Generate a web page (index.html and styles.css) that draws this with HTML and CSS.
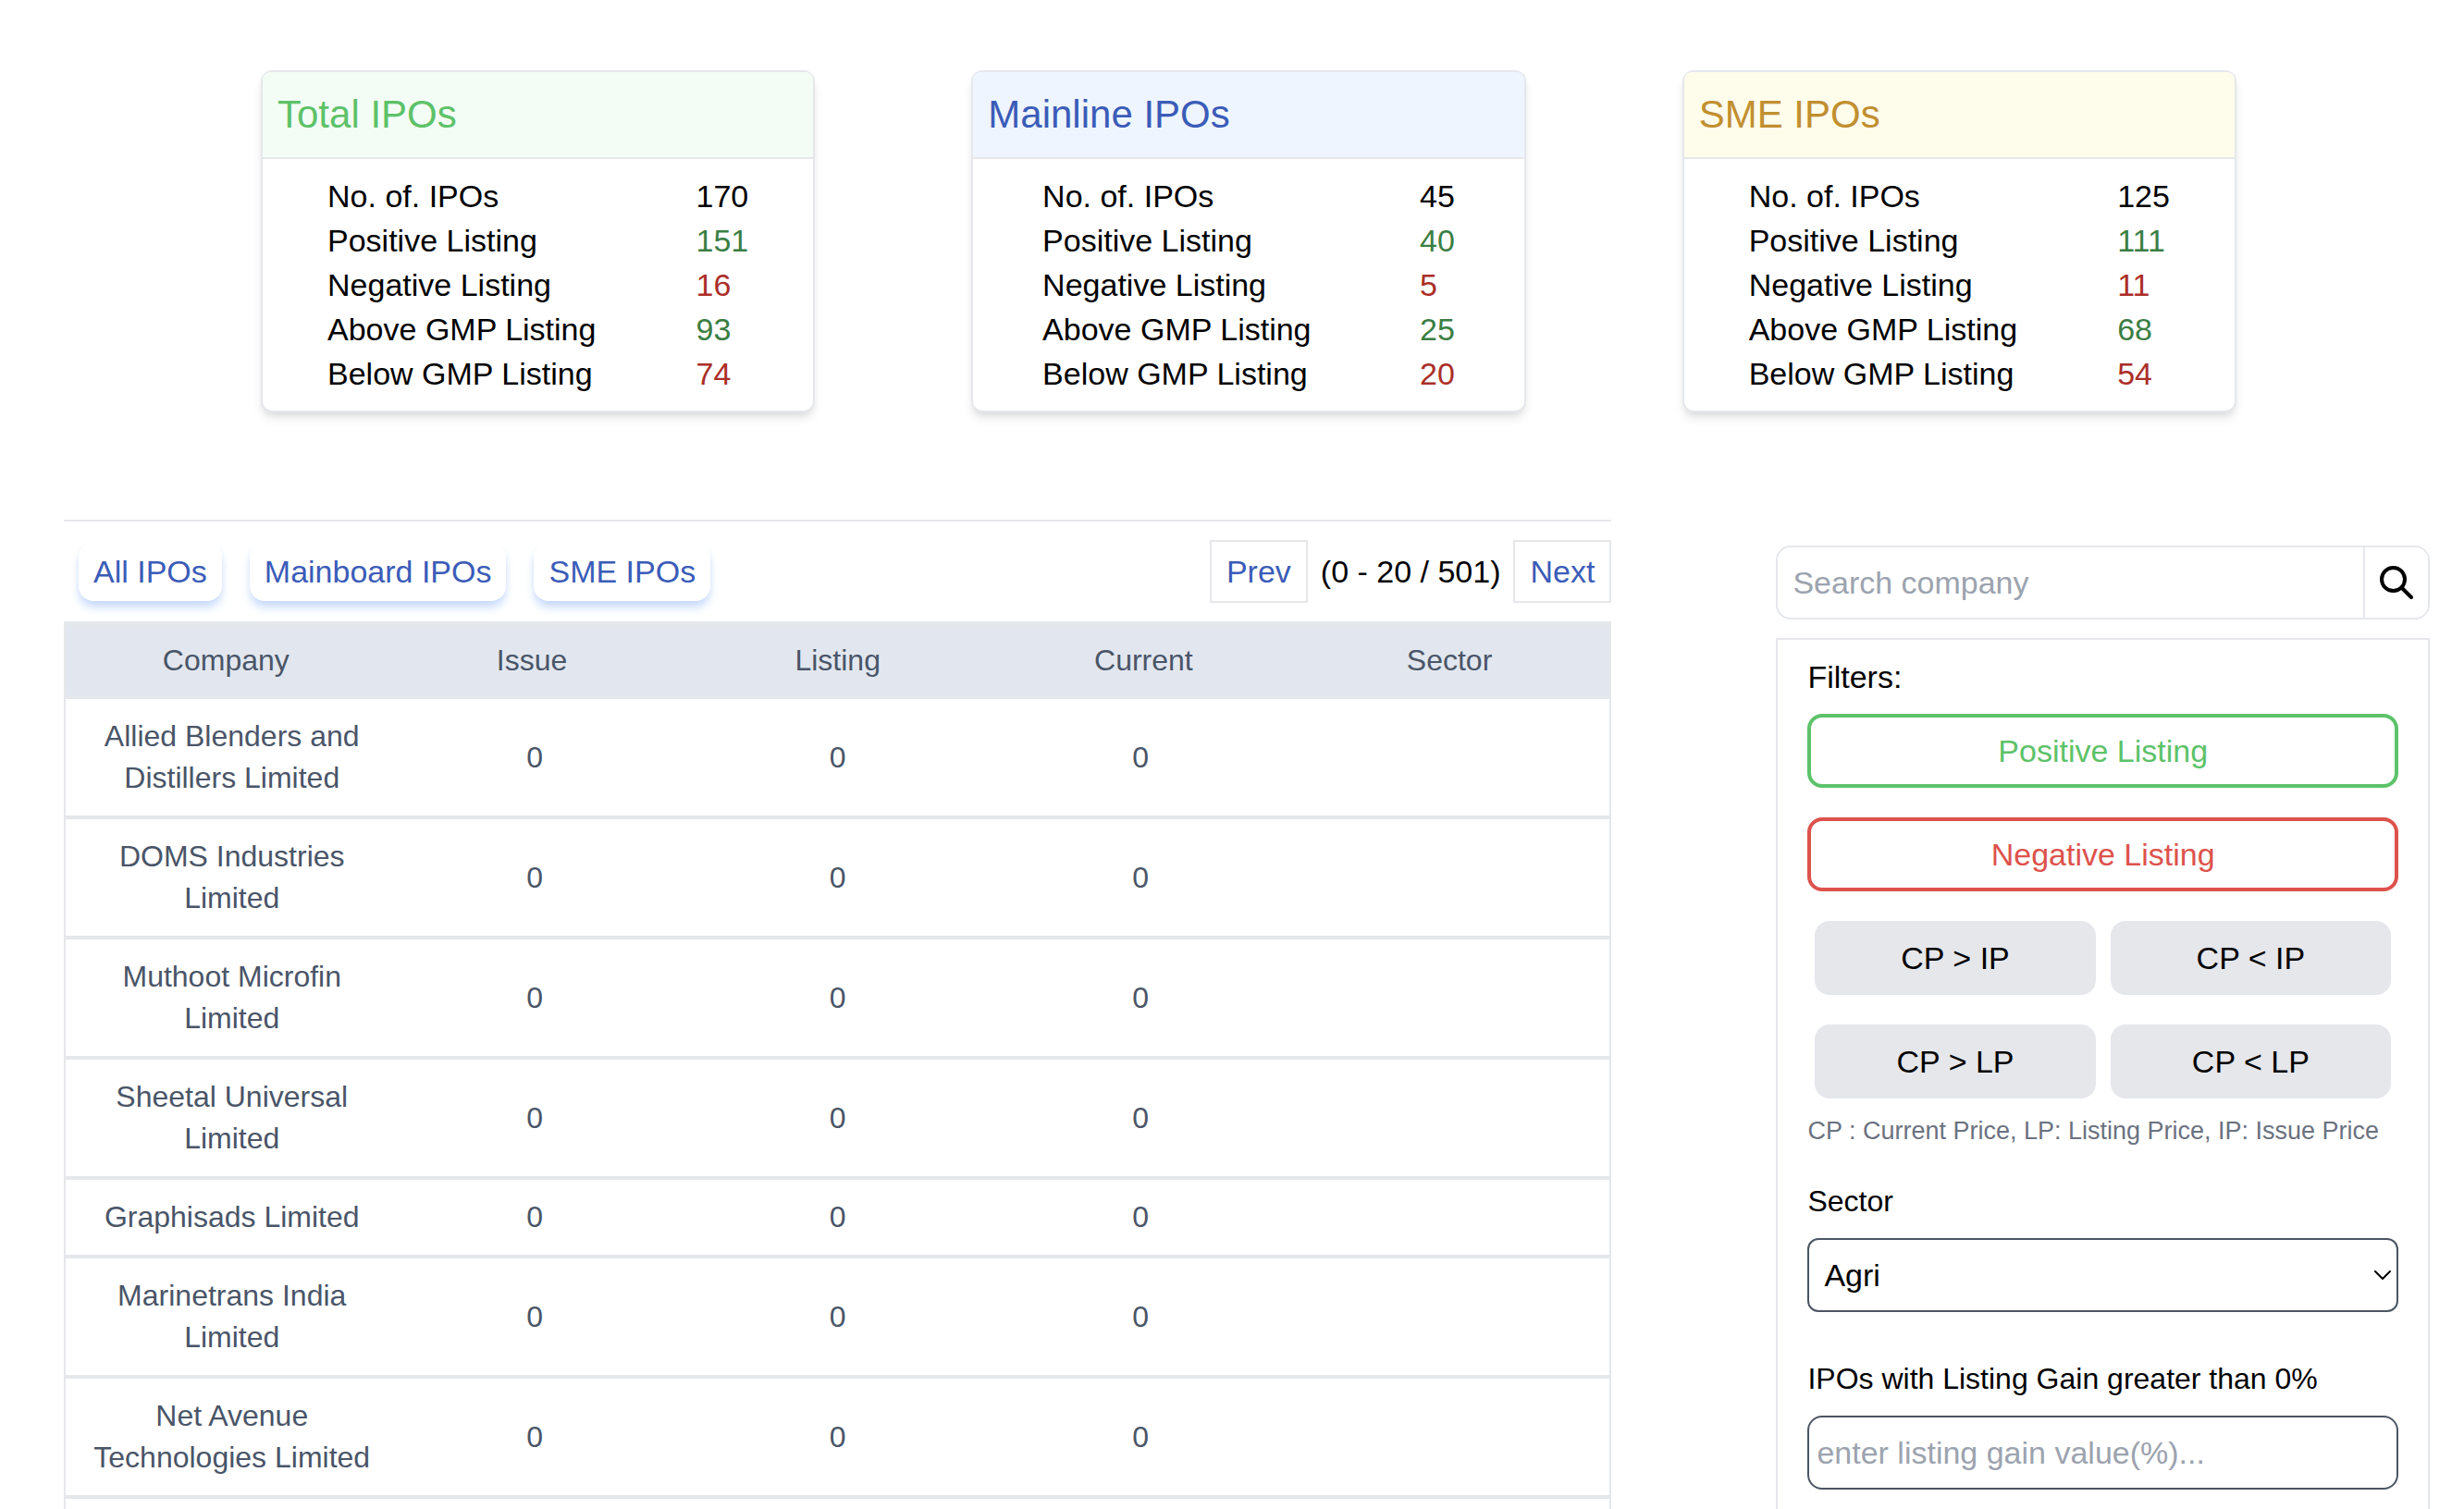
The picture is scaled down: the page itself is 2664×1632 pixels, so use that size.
FILE: index.html
```html
<!DOCTYPE html>
<html lang="en">
<head>
<meta charset="utf-8">
<meta name="viewport" content="width=device-width, initial-scale=1">
<title>IPO Performance</title>
<link rel="stylesheet" href="styles.css">
</head>
<body>
<main class="page">
  <section class="cards">
    <article class="card">
      <h2 class="card-title card-title-total">Total IPOs</h2>
      <dl class="stats">
        <dt>No. of. IPOs</dt><dd>170</dd>
        <dt>Positive Listing</dt><dd class="up">151</dd>
        <dt>Negative Listing</dt><dd class="down">16</dd>
        <dt>Above GMP Listing</dt><dd class="up">93</dd>
        <dt>Below GMP Listing</dt><dd class="down">74</dd>
      </dl>
    </article>
    <article class="card">
      <h2 class="card-title card-title-mainline">Mainline IPOs</h2>
      <dl class="stats">
        <dt>No. of. IPOs</dt><dd>45</dd>
        <dt>Positive Listing</dt><dd class="up">40</dd>
        <dt>Negative Listing</dt><dd class="down">5</dd>
        <dt>Above GMP Listing</dt><dd class="up">25</dd>
        <dt>Below GMP Listing</dt><dd class="down">20</dd>
      </dl>
    </article>
    <article class="card">
      <h2 class="card-title card-title-sme">SME IPOs</h2>
      <dl class="stats">
        <dt>No. of. IPOs</dt><dd>125</dd>
        <dt>Positive Listing</dt><dd class="up">111</dd>
        <dt>Negative Listing</dt><dd class="down">11</dd>
        <dt>Above GMP Listing</dt><dd class="up">68</dd>
        <dt>Below GMP Listing</dt><dd class="down">54</dd>
      </dl>
    </article>
  </section>

  <div class="content">
    <section class="listing">
      <div class="toolbar">
        <div class="tabs">
          <button class="tab" type="button">All IPOs</button>
          <button class="tab" type="button">Mainboard IPOs</button>
          <button class="tab" type="button">SME IPOs</button>
        </div>
        <div class="pager">
          <button class="pager-button" type="button">Prev</button>
          <span>(0 - 20 / 501)</span>
          <button class="pager-button" type="button">Next</button>
        </div>
      </div>
      <div class="table-wrap">
        <table class="ipo-table">
          <thead>
            <tr><th scope="col">Company</th><th scope="col">Issue</th><th scope="col">Listing</th><th scope="col">Current</th><th scope="col">Sector</th></tr>
          </thead>
          <tbody>
            <tr><td>Allied Blenders and Distillers Limited</td><td>0</td><td>0</td><td>0</td><td></td></tr>
            <tr><td>DOMS Industries Limited</td><td>0</td><td>0</td><td>0</td><td></td></tr>
            <tr><td>Muthoot Microfin Limited</td><td>0</td><td>0</td><td>0</td><td></td></tr>
            <tr><td>Sheetal Universal Limited</td><td>0</td><td>0</td><td>0</td><td></td></tr>
            <tr><td>Graphisads Limited</td><td>0</td><td>0</td><td>0</td><td></td></tr>
            <tr><td>Marinetrans India Limited</td><td>0</td><td>0</td><td>0</td><td></td></tr>
            <tr><td>Net Avenue Technologies Limited</td><td>0</td><td>0</td><td>0</td><td></td></tr>
          </tbody>
        </table>
      </div>
    </section>

    <aside class="sidebar">
      <form class="search">
        <input class="search-input" type="search" placeholder="Search company" aria-label="Search company">
        <button class="search-button" type="button" aria-label="Search">
          <svg class="search-icon" viewBox="0 0 36 36" fill="none" stroke="currentColor" stroke-width="4" stroke-linecap="round" aria-hidden="true">
            <circle cx="14.5" cy="14.5" r="12.5"/>
            <path d="M23.5 23.5L34 34"/>
          </svg>
        </button>
      </form>
      <div class="filters">
        <h3 class="filters-title">Filters:</h3>
        <div class="filter-main">
          <button class="filter filter-positive" type="button">Positive Listing</button>
          <button class="filter filter-negative" type="button">Negative Listing</button>
        </div>
        <div class="filter-grid">
          <button class="filter" type="button">CP &gt; IP</button>
          <button class="filter" type="button">CP &lt; IP</button>
          <button class="filter" type="button">CP &gt; LP</button>
          <button class="filter" type="button">CP &lt; LP</button>
        </div>
        <p class="note">CP : Current Price, LP: Listing Price, IP: Issue Price</p>
        <div class="field">
          <label for="sector">Sector</label>
          <div class="select-wrap">
            <select class="control control-select" id="sector"><option>Agri</option></select>
            <svg class="chevron" viewBox="0 0 18 11" fill="none" stroke="currentColor" stroke-width="2" stroke-linecap="round" stroke-linejoin="round" aria-hidden="true"><path d="M1 1l8 8 8-8"/></svg>
          </div>
        </div>
        <div class="field">
          <label for="gain">IPOs with Listing Gain greater than 0%</label>
          <input class="control control-text" id="gain" type="text" placeholder="enter listing gain value(%)...">
        </div>
      </div>
    </aside>
  </div>
</main>
</body>
</html>
```
FILE: styles.css
```css
*,
*::before,
*::after {
  box-sizing: border-box;
}

:root {
  --line: #e5e7eb;
  --blue: #3b5cb8;
  --green: #5dc269;
  --red: #dd524c;
  --slate: #4a5568;
}

body {
  margin: 0;
  background: #fff;
  color: #000;
  font: 34px/48px "Liberation Sans", Arial, sans-serif;
}

h2, h3, p, dl, dd {
  margin: 0;
  font-weight: 400;
}

button, input, select {
  margin: 0;
  font: inherit;
  color: inherit;
}

button {
  cursor: pointer;
}

.page {
  display: flex;
  flex-direction: column;
  min-height: 100vh;
  padding-top: 76px;
}

/* Summary cards */
.cards {
  display: grid;
  grid-template-columns: repeat(3, 1fr);
  gap: 169px;
  padding: 0 246px 0 282px;
}

.card {
  border: 2px solid var(--line);
  border-radius: 12px;
  background: #fff;
  box-shadow: 0 8px 12px -2px rgb(0 0 0 / 10%), 0 4px 8px -4px rgb(0 0 0 / 10%);
}

.card-title {
  padding: 16px;
  border-bottom: 2px solid var(--line);
  border-radius: 8px 8px 0 0;
  font-size: 42px;
  line-height: 60px;
}

.card-title-total {
  background: #f3fcf5;
  color: var(--green);
}

.card-title-mainline {
  background: #eff5fe;
  color: var(--blue);
}

.card-title-sme {
  background: #fefceb;
  color: #c18f30;
}

.stats {
  display: grid;
  grid-template-columns: max-content max-content;
  justify-content: space-around;
  padding: 16px;
}

.up {
  color: #3b7e44;
}

.down {
  color: #ab2e28;
}

/* Listing table and sidebar */
.content {
  display: grid;
  flex: 1;
  grid-template-columns: 1672fr 706fr;
  gap: 178px;
  margin-top: 116px;
  padding: 0 37px 0 69px;
}

.listing {
  display: flex;
  flex-direction: column;
  border-top: 2px solid var(--line);
}

.toolbar {
  display: flex;
  align-items: center;
  justify-content: space-between;
  padding: 20px 0 20px 16px;
}

.tabs {
  display: flex;
  gap: 30px;
}

.tab {
  padding: 8px 16px;
  border: 0;
  border-radius: 16px;
  background: #fff;
  color: var(--blue);
  box-shadow: 0 8px 12px -2px #c5d9fb, 0 4px 8px -4px #c5d9fb;
}

.pager {
  display: flex;
  align-items: center;
  gap: 14px;
}

.pager-button {
  padding: 8px 16px;
  border: 2px solid var(--line);
  background: #fff;
  color: var(--blue);
}

.table-wrap {
  flex: 1;
  border: solid var(--line);
  border-width: 4px 2px 0;
}

.ipo-table {
  display: block;
  color: var(--slate);
  font-size: 32px;
  line-height: 45px;
  text-align: center;
}

.ipo-table thead,
.ipo-table tbody {
  display: block;
}

.ipo-table tr {
  display: grid;
  grid-template-columns: repeat(5, 1fr);
  align-items: center;
  padding: 18px 16px;
  border-bottom: 4px solid var(--line);
}

.ipo-table thead tr {
  padding: 16px 8px 15px;
  background: #e2e7ef;
}

.ipo-table th,
.ipo-table td {
  padding: 0 8px;
  font-weight: 400;
}

.sidebar {
  display: flex;
  flex-direction: column;
  gap: 20px;
  padding-top: 28px;
}

.search {
  display: flex;
  height: 80px;
  border: 2px solid var(--line);
  border-radius: 16px;
  overflow: hidden;
}

.search-input {
  flex: 1;
  min-width: 0;
  padding: 0 16px;
  border: 0;
  background: none;
  outline: 0;
  appearance: none;
}

::placeholder {
  color: #9ca3af;
  opacity: 1;
}

.search-button {
  display: flex;
  align-items: center;
  padding: 0 16px;
  border: 0;
  border-left: 2px solid var(--line);
  background: #fff;
}

.search-icon {
  width: 36px;
  height: 36px;
}

.filters {
  flex: 1;
  padding: 16px 32px 20px;
  border: solid var(--line);
  border-width: 2px 2px 0;
}

.filters-title {
  margin-bottom: 16px;
  font-size: 34px;
}

.filter-main,
.filter-grid {
  display: grid;
  gap: 32px 16px;
  margin-bottom: 32px;
}

.filter-grid {
  grid-template-columns: 1fr 1fr;
  margin-bottom: 15px;
  padding: 0 8px;
}

.filter {
  padding: 16px;
  border: 0;
  border-radius: 16px;
  background: var(--line);
}

.filter-positive,
.filter-negative {
  padding: 12px;
  border: 4px solid;
  background: #fff;
}

.filter-positive {
  color: var(--green);
}

.filter-negative {
  color: var(--red);
}

.note {
  color: #6b7280;
  font-size: 27px;
  line-height: 40px;
}

.field {
  display: flex;
  flex-direction: column;
  gap: 16px;
  margin-top: 32px;
}

.field + .field {
  margin-top: 48px;
}

.field label {
  font-size: 32px;
}

.select-wrap {
  position: relative;
  display: grid;
}

.control {
  width: 100%;
  height: 80px;
  border: 2px solid #4b5563;
  background: #fff;
}

.control-select {
  padding: 0 48px 0 16px;
  border-radius: 12px;
  appearance: none;
}

.chevron {
  position: absolute;
  top: 50%;
  right: 8px;
  width: 18px;
  height: 11px;
  margin-top: -5px;
  pointer-events: none;
}

.control-text {
  padding: 0 8px;
  border-radius: 16px;
}
```
